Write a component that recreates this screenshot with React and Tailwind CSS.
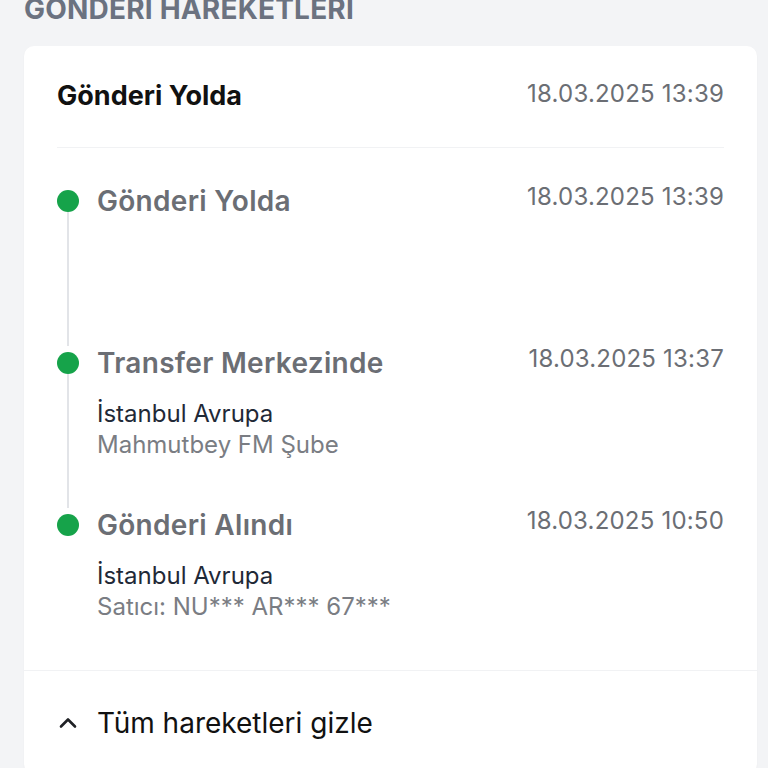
import React from 'react';

const events = [
  { title: 'Gönderi Yolda', date: '18.03.2025 13:39', lines: [] },
  { title: 'Transfer Merkezinde', date: '18.03.2025 13:37', lines: ['İstanbul Avrupa', 'Mahmutbey FM Şube'] },
  { title: 'Gönderi Alındı', date: '18.03.2025 10:50', lines: ['İstanbul Avrupa', 'Satıcı: NU*** AR*** 67***'] },
];

function ChevronUp() {
  return (
    <svg width="20" height="20" viewBox="0 0 20 20" fill="none" stroke="#1f2125" strokeWidth="2.6" strokeLinecap="round" strokeLinejoin="round">
      <path d="M3 13.5 10 6.5l7 7" />
    </svg>
  );
}

export default function App() {
  return (
    <div className="min-h-[768px] bg-[#f3f4f6] px-[24px] pr-[11px] font-['Inter',sans-serif] overflow-hidden">
      <h2 className="-mt-[7px] mb-[21px] text-[28px] leading-[32px] font-bold tracking-[0.2px] text-[#6b7280]">
        GÖNDERİ HAREKETLERİ
      </h2>

      <div className="bg-white rounded-[10px] shadow-[0_1px_2px_rgba(0,0,0,0.04)]">
        <div className="mx-[33px] flex items-center justify-between h-[102px] border-b border-[#f1f2f4]">
          <span className="text-[27px] font-bold text-[#111111]">Gönderi Yolda</span>
          <span className="text-[24px] tracking-[0.2px] text-[#6b6e74] -mt-[6px]">18.03.2025 13:39</span>
        </div>

        <div className="px-[33px] pt-[36px]">
          {events.map((ev, i) => {
            const last = i === events.length - 1;
            return (
              <div key={i} className="flex gap-[18px] h-[162px]">
                <div className="w-[22px] flex flex-col items-center">
                  <div className="mt-[6px] w-[22px] h-[22px] rounded-full bg-[#16a34a] shrink-0" />
                  {!last && <div className="w-[2px] flex-1 bg-[#e2e4e8]" />}
                </div>
                <div className="flex-1">
                  <div className="flex items-start justify-between">
                    <span className="text-[28px] leading-[34px] font-semibold tracking-[0.3px] text-[#6b6e74]">{ev.title}</span>
                    <span className="text-[24px] leading-[26px] tracking-[0.2px] text-[#6b6e74]">{ev.date}</span>
                  </div>
                  {ev.lines.length > 0 && (
                    <div className="mt-[18px]">
                      <div className="text-[24px] leading-[31px] text-[#1f2937]">{ev.lines[0]}</div>
                      <div className="text-[24px] leading-[31px] text-[#7a7d83]">{ev.lines[1]}</div>
                    </div>
                  )}
                </div>
              </div>
            );
          })}
        </div>

        <div className="border-t border-[#f1f2f4] px-[33px] h-[104px] flex items-center gap-[18px]">
          <div className="w-[22px] flex justify-center">
            <ChevronUp />
          </div>
          <span className="text-[28px] text-[#111111]">Tüm hareketleri gizle</span>
        </div>
      </div>
    </div>
  );
}
